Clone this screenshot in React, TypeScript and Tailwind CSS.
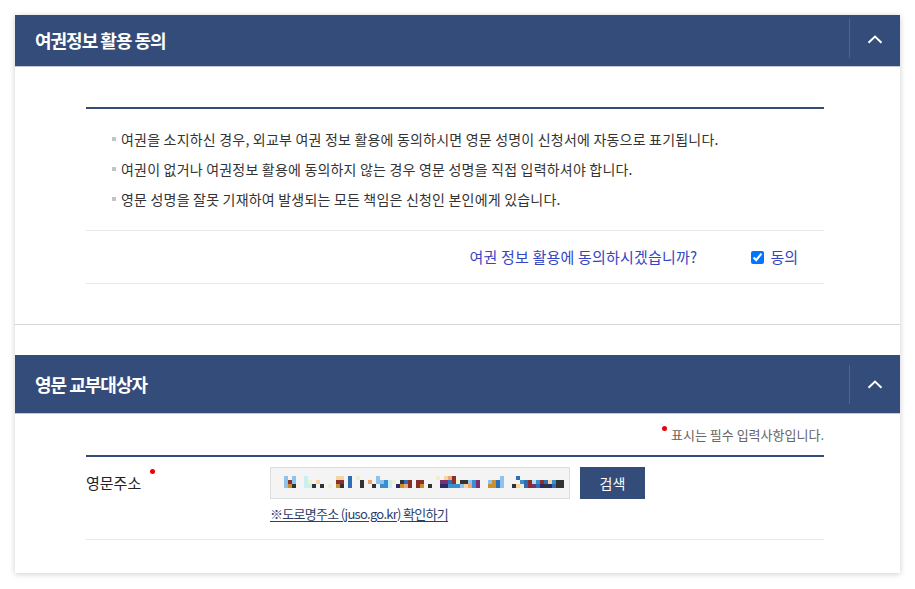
import React from "react";

const COLORS: Record<string, string> = {
  a: "#8ec3ee",
  b: "#8b2e2e",
  c: "#c8902e",
  d: "#333333",
  e: "#c8f0f0",
  f: "#f5d5a0",
  g: "#f3efcc",
  h: "#2f6db5",
  i: "#e8a870",
  j: "#3a8fd0",
  k: "#2a2a6a",
  l: "#7a3070",
  m: "#b0e0f0",
};

const MOSAIC = [
  "aaa", ".bc", "aad", "...", "...", "eee", ".ge", "..d", ".f.", "..d", "...", "..g", "...",
  "fbc", "fbd", "...", "hhh", "...", "g..", ".dd", "...", ".i.", "..d", "aa.", ".aj", ".jj",
  ".ee", ".g.", "..k", ".dc", ".hi", ".bb", "...", ".bb", ".bc", "...", "..d", "...", "g..",
  ".lk", "flk", "ihj", "bbj", ".gj", ".da", ".df", ".ai", ".jj", ".ll", "...", "...", ".ac",
  ".cc", ".hh", "aaa", "...", "...", "..d", "h.f", ".jg", ".hh", ".bb", ".ml", ".jh", ".bk",
  ".hd", ".fk", ".jh", ".dd", ".dd",
];

function Chevron() {
  return (
    <svg width="16" height="9" viewBox="0 0 16 9" fill="none">
      <polyline points="1.5,7.8 8,1.6 14.5,7.8" stroke="white" strokeWidth="2" strokeLinejoin="miter" />
    </svg>
  );
}

function Header({ title, tall }: { title: string; tall?: boolean }) {
  return (
    <div
      className={`flex bg-[#344c79] border-b border-[#c3c8d2] ${tall ? "h-[59px] items-center" : "h-[52px] items-start"}`}
    >
      <div className={`flex-1 pl-[20px] text-white font-bold text-[18px] tracking-[-1px] ${tall ? "" : "self-center"}`}>
        {title}
      </div>
      <div className={`w-px bg-[#4e6390] ${tall ? "h-[39px]" : "h-[40px] mt-[3px]"}`} />
      <div className={`w-[50px] flex items-center justify-center ${tall ? "h-full" : "h-[48px]"}`}>
        <Chevron />
      </div>
    </div>
  );
}

function Bullet({ children }: { children: React.ReactNode }) {
  return (
    <li className="flex items-center leading-[30px]">
      <span className="ml-[26px] mr-[5px] w-[4px] h-[4px] bg-[#c4c4c4]" />
      <span>{children}</span>
    </li>
  );
}

function Mosaic() {
  return (
    <div className="flex">
      {MOSAIC.map((col, i) => (
        <div key={i} className="flex flex-col w-[4px]">
          {col.split("").map((c, j) => (
            <div
              key={j}
              className="h-[4px]"
              style={{ backgroundColor: c === "." ? "transparent" : COLORS[c] }}
            />
          ))}
        </div>
      ))}
    </div>
  );
}

export default function App() {
  return (
    <div className="min-h-screen bg-white p-[15px] font-['Noto_Sans_CJK_KR',sans-serif]">
      <div className="w-[885px] bg-white shadow-[0_1px_6px_rgba(0,0,0,0.2)]">
        <Header title="여권정보 활용 동의" />
        <div className="border-b border-[#d6d6d6] pt-[40px] pb-[40px]">
          <div className="ml-[71px] w-[738px]">
            <div className="h-[2px] bg-[#344c79]" />
            <ul className="pt-[15px] pb-[16px] text-[14px] tracking-[0.2px] text-[#333]">
              <Bullet>여권을 소지하신 경우, 외교부 여권 정보 활용에 동의하시면 영문 성명이 신청서에 자동으로 표기됩니다.</Bullet>
              <Bullet>여권이 없거나 여권정보 활용에 동의하지 않는 경우 영문 성명을 직접 입력하셔야 합니다.</Bullet>
              <Bullet>영문 성명을 잘못 기재하여 발생되는 모든 책임은 신청인 본인에게 있습니다.</Bullet>
            </ul>
            <div className="flex h-[54px] items-center justify-end border-y border-[#e8e8e8] pr-[26px]">
              <span className="text-[15px] tracking-[0.2px] text-[#3445c4]">여권 정보 활용에 동의하시겠습니까?</span>
              <label className="ml-[54px] flex items-center gap-[6px] text-[15px] tracking-[0px] text-[#3445c4]">
                <input type="checkbox" defaultChecked className="m-0 w-[13px] h-[13px]" />
                동의
              </label>
            </div>
          </div>
        </div>
        <div className="h-[30px]" />
        <Header title="영문 교부대상자" tall />
        <div className="pt-[11px] pb-[33px]">
          <div className="ml-[71px] w-[738px]">
            <div className="flex justify-end items-start h-[20px] leading-[20px] text-[13px] tracking-[0px] text-[#666]">
              <span className="mt-[1px] mr-[4px] w-[5px] h-[5px] rounded-full bg-[#e8000b]" />
              표시는 필수 입력사항입니다.
            </div>
            <div className="mt-[10px] h-[2px] bg-[#344c79]" />
            <div className="flex pt-[10px] pb-[16px] border-b border-[#e8e8e8]">
              <div className="w-[184px] flex items-start">
                <span className="leading-[32px] text-[15px] tracking-[0px] text-[#222]">영문주소</span>
                <span className="ml-[9px] mt-[2px] w-[5px] h-[5px] rounded-full bg-[#e8000b]" />
              </div>
              <div className="flex flex-col">
                <div className="flex">
                  <div className="w-[300px] h-[32px] bg-[#f4f4f4] border border-[#dcdcdc] flex items-center pl-[13px] pb-[2px]">
                    <Mosaic />
                  </div>
                  <button className="ml-[10px] w-[65px] h-[32px] bg-[#344c79] text-white text-[14px] tracking-[0px]">
                    검색
                  </button>
                </div>
                <a className="mt-[6px] leading-[18px] text-[13px] tracking-[-0.7px] text-[#2b3f6c] underline underline-offset-2">
                  ※도로명주소 (juso.go.kr) 확인하기
                </a>
              </div>
            </div>
          </div>
        </div>
      </div>
    </div>
  );
}
